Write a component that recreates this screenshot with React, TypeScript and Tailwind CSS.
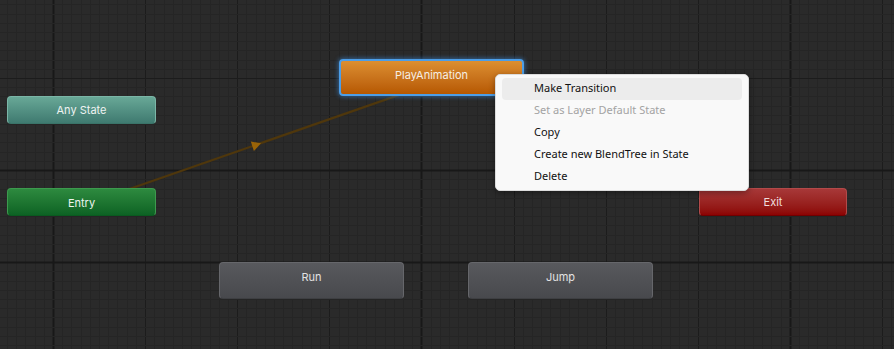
import React from 'react';

const STEP = 9.21;

// grid lines, generated from the canvas origin (major every 10 minor cells)
const GRID_X = Array.from({ length: 110 }, (_, i) => i - 6).map((i) => ({
  pos: Math.round(53 + i * STEP) + 0.5,
  kind: i % 40 === 0 ? 'super' : i % 10 === 0 ? 'major' : 'minor',
}));
const GRID_Y = Array.from({ length: 50 }, (_, i) => i - 9).map((i) => ({
  pos: Math.round(78 + i * STEP) + 0.5,
  kind: i === 10 || i === 20 ? 'super' : i % 10 === 0 ? 'major' : 'minor',
}));

const STROKE: Record<string, string> = {
  minor: '#252525',
  major: '#1c1c1c',
  super: '#181818',
};

function StateNode({
  label,
  className,
}: {
  label: string;
  className: string;
}) {
  return (
    <div
      className={`absolute flex items-center justify-center rounded-[4px] text-[11px] font-['Inter',sans-serif] ${className}`}
    >
      {label}
    </div>
  );
}

const MENU = [
  { label: 'Make Transition', active: true },
  { label: 'Set as Layer Default State', disabled: true },
  { label: 'Copy' },
  { label: 'Create new BlendTree in State' },
  { label: 'Delete' },
];

export default function App() {
  return (
    <div className="relative h-[349px] w-full overflow-hidden bg-[#2a2a2a]">
      {/* Grid + transitions */}
      <svg className="absolute inset-0" width="100%" height="100%">
        {GRID_X.map((l, i) => (
          <line key={`x${i}`} x1={l.pos} x2={l.pos} y1={0} y2={349} stroke={STROKE[l.kind]} strokeWidth={l.kind === 'super' ? 2 : 1} />
        ))}
        {GRID_Y.map((l, i) => (
          <line key={`y${i}`} y1={l.pos} y2={l.pos} x1={0} x2={894} stroke={STROKE[l.kind]} strokeWidth={l.kind === 'super' ? 2 : 1} />
        ))}
        <line x1={100} y1={199.2} x2={420} y2={87.6} stroke="#4f370c" strokeWidth={2.2} />
        <polygon points="261,143.2 253.9,151 250.8,141.6" fill="#9a6408" />
      </svg>

      <StateNode
        label="Any State"
        className="left-[7px] top-[96px] h-[28px] w-[149px] pt-[1px] border border-[#7bb6a7] border-b-[#3a7368] bg-gradient-to-b from-[#68a897] to-[#3f7a70] text-[#eef3f1]"
      />
      <StateNode
        label="Entry"
        className="left-[7px] top-[188px] h-[28px] w-[149px] pt-[2px] border border-[#3d9a4e] border-b-[#0b5a20] bg-gradient-to-b from-[#2d8a3f] to-[#0d6324] text-[#eef4ef]"
      />
      <StateNode
        label="PlayAnimation"
        className="left-[339px] top-[59px] h-[37px] w-[185px] pb-[5px] border-2 border-[#4c9ee8] bg-gradient-to-b from-[#dc8f30] to-[#b65800] text-[#f6eee4] shadow-[0_0_4px_1px_rgba(60,140,220,0.55)]"
      />
      <StateNode
        label="Exit"
        className="left-[699px] top-[188px] h-[28px] w-[148px] pt-[1px] border border-[#b24a4a] border-b-[#700000] bg-gradient-to-b from-[#a73838] to-[#8c0303] text-[#f0dede]"
      />
      <StateNode
        label="Run"
        className="left-[219px] top-[262px] h-[37px] w-[185px] pb-[6px] border border-[#66676b] border-b-[#3e3f42] bg-gradient-to-b from-[#58595d] to-[#48494d] text-[#e2e2e2]"
      />
      <StateNode
        label="Jump"
        className="left-[468px] top-[262px] h-[37px] w-[185px] pb-[6px] border border-[#66676b] border-b-[#3e3f42] bg-gradient-to-b from-[#58595d] to-[#48494d] text-[#e2e2e2]"
      />

      {/* Context menu */}
      <div className="absolute left-[495px] top-[74px] flex w-[254px] flex-col rounded-[5px] border border-[#dcdcdc] bg-[#f9f9f9] px-[6px] pb-[2px] pt-[3px] shadow-[0_2px_6px_rgba(0,0,0,0.35)] font-['Segoe_UI','Noto_Sans',sans-serif] text-[11px]">
        {MENU.map((item) => (
          <div
            key={item.label}
            className={`flex h-[22px] items-center rounded-[4px] pb-[2px] pl-[32px] ${
              item.active ? 'bg-[#ececec]' : ''
            } ${item.disabled ? 'text-[#a3a3a3]' : 'text-[#111111]'}`}
          >
            {item.label}
          </div>
        ))}
      </div>
    </div>
  );
}
